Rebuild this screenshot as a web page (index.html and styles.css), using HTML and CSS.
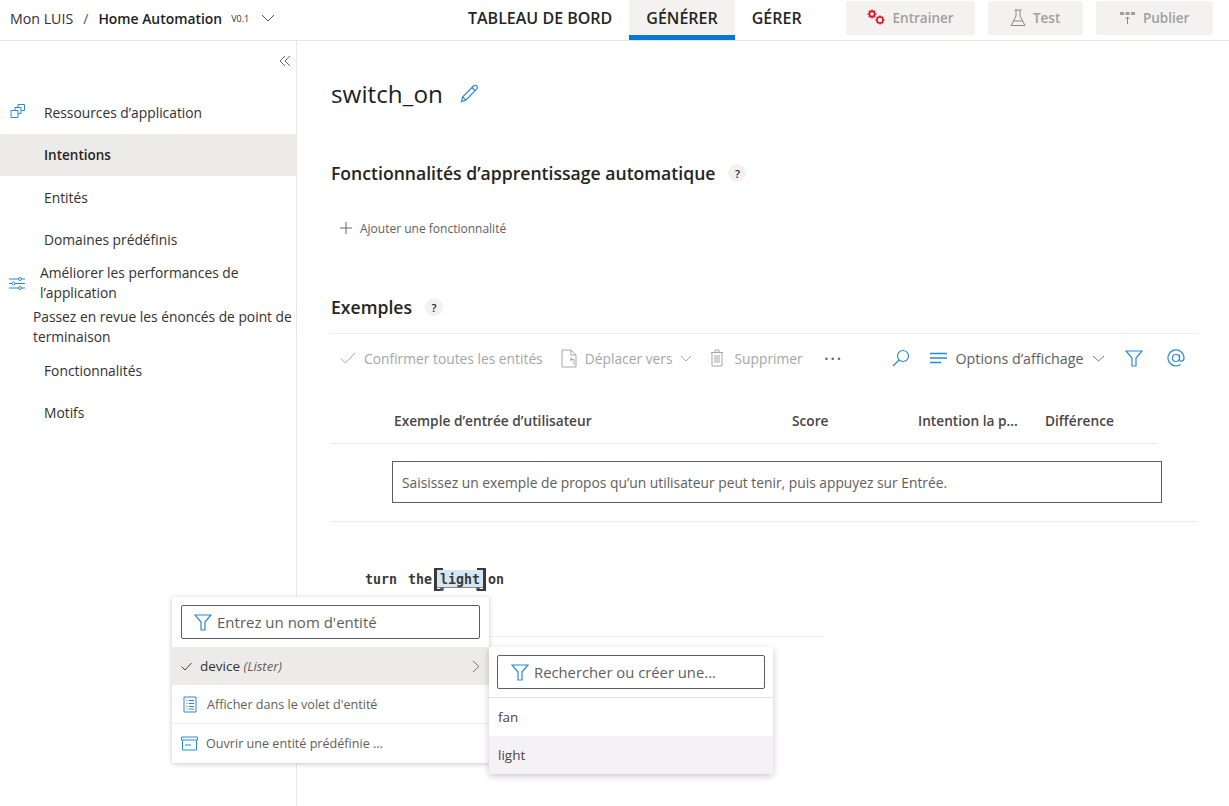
FILE: index.html
```html
<!DOCTYPE html>
<html lang="fr">
<head>
  <meta charset="UTF-8" />
  <title>switch_on - LUIS</title>
  <link rel="stylesheet" href="styles.css">
</head>
<body>
  <header class="topbar">
    <div class="crumbs">
      <span>Mon LUIS</span>
      <span class="slash">/</span>
      <strong>Home Automation</strong>
      <span class="version">V0.1</span>
      <svg class="chev" width="14" height="8" viewBox="0 0 14 8"><path d="M1 1l6 6 6-6" fill="none" stroke="#555" stroke-width="1"/></svg>
    </div>
    <nav class="tabs">
      <a class="tab">TABLEAU DE BORD</a>
      <a class="tab active">GÉNÉRER</a>
      <a class="tab">GÉRER</a>
    </nav>
    <div class="actions">
      <button class="btn btn-train">
        <svg width="19" height="17" viewBox="0 0 19 17" fill="none" stroke="#e81123" stroke-width="1.6"><circle cx="5" cy="5" r="2.6"/><circle cx="13" cy="11" r="3"/><path d="M5 .5v1.5M5 8v1.5M.5 5H2M8 5h1.500M1.900 1.900l1 1M7.100 7.100l1 1M8.100 1.900l-1 1M2.900 7.100l-1 1M13 6.500V8M13 14v1.500M8.500 11H10M16 11h1.500M9.900 7.900l1 1M15.100 13.100l1 1M16.100 7.900l-1 1M10.900 13.100l-1 1"/></svg>
        Entrainer
      </button>
      <button class="btn btn-test">
        <svg width="16" height="18" viewBox="0 0 16 18" fill="none" stroke="#8a8886"><path d="M4.500 1h7M6 1v6L1 16.500h14L10 7V1M3.500 12h9"/></svg>
        Test
      </button>
      <button class="btn btn-publish">
        <svg width="17" height="15" viewBox="0 0 17 15"><path d="M1 2h4v3H1zM6.500 2h4v3h-4zM12 2h4v3h-4z" fill="#a19f9d"/><path d="M8.500 14V7M6.500 9l2-2 2 2" fill="none" stroke="#8a8886"/></svg>
        Publier
      </button>
    </div>
  </header>

  <div class="layout">
    <aside class="sidebar">
      <div class="collapse">
        <svg width="12" height="12" viewBox="0 0 12 12" fill="none" stroke="#666"><path d="M6 1L1 6l5 5M11 1L6 6l5 5"/></svg>
      </div>
      <ul class="nav">
        <li class="nav-item nav-res">
          <svg class="nav-icon" width="16" height="16" viewBox="0 0 16 16" fill="none" stroke="#2b88d8"><path d="M1 7.500h7v7H1zM5 7.500V4.500h6v6H8M8 4.500V1.500h6.500v6H11"/></svg>
          Ressources d’application
        </li>
        <li class="nav-item current">Intentions</li>
        <li class="nav-item">Entités</li>
        <li class="nav-item">Domaines prédéfinis</li>
        <li class="nav-long nav-perf">
          <svg class="perf-icon" width="16" height="15" viewBox="0 0 16 15" fill="none" stroke="#2b88d8"><path d="M0 3h16M0 7.500h16M0 12h16"/><circle cx="11" cy="3" r="1.500" fill="#fff"/><circle cx="4.500" cy="7.500" r="1.500" fill="#fff"/><circle cx="11" cy="12" r="1.500" fill="#fff"/></svg>
          Améliorer les performances de l’application
        </li>
        <li class="nav-long nav-review">Passez en revue les énoncés de point de terminaison</li>
        <li class="nav-item">Fonctionnalités</li>
        <li class="nav-item">Motifs</li>
      </ul>
    </aside>

    <main class="content">
      <div class="title-row">
        <h1>switch_on</h1>
        <svg width="19" height="19" viewBox="0 0 19 19" fill="none" stroke="#2b88d8" stroke-width="1.200"><path d="M1.500 17.500l1.200-4.700L13.500 2c1-1 2.500-1 3.300-.1s.8 2.200-.2 3.200L5.800 16.200zM2.700 12.800l3.100 3.400M12 3.500l3.400 3.300"/></svg>
      </div>

      <section class="features">
        <h2>Fonctionnalités d’apprentissage automatique <span class="help">?</span></h2>
        <div class="add-feature">
          <svg width="14" height="14" viewBox="0 0 14 14" stroke="#666"><path d="M7 1v12M1 7h12"/></svg>
          Ajouter une fonctionnalité
        </div>
      </section>

      <section class="examples">
        <h2>Exemples <span class="help">?</span></h2>
        <div class="toolbar">
          <span class="tool off tool-confirm">
            <svg width="16" height="12" viewBox="0 0 16 12" fill="none" stroke="#a6a6a6"><path d="M1 6.500l4.500 4.500L15 1"/></svg>
            Confirmer toutes les entités
          </span>
          <span class="tool off tool-move">
            <svg width="16" height="19" viewBox="0 0 16 19" fill="none" stroke="#a6a6a6"><path d="M10 1H1v17h14V6zM10 1v5h5M11 9l-2 1.500 2 1.500M9.500 10.500H13V16"/></svg>
            Déplacer vers
            <svg width="12" height="7" viewBox="0 0 12 7" fill="none" stroke="#a6a6a6"><path d="M1 1l5 5 5-5"/></svg>
          </span>
          <span class="tool off tool-delete">
            <svg width="14" height="18" viewBox="0 0 14 18" fill="none" stroke="#a6a6a6"><path d="M1 3.500h12M5 3.500V1h4v2.500M2 3.500V17h10V3.500M5 6v8M7 6v8M9 6v8"/></svg>
            Supprimer
          </span>
          <span class="dots">···</span>
          <span class="tool-right">
            <svg class="tool-search" width="18" height="18" viewBox="0 0 18 18" fill="none" stroke="#2b88d8" stroke-width="1.200"><circle cx="11" cy="7" r="5.500"/><path d="M7 11l-6 6"/></svg>
            <span class="tool view">
              <svg width="17" height="12" viewBox="0 0 17 12" fill="none" stroke="#2b88d8" stroke-width="1.300"><path d="M0 1.500h17M0 6h17M0 10.500h11"/></svg>
              Options d’affichage
              <svg width="13" height="7" viewBox="0 0 13 7" fill="none" stroke="#777"><path d="M1 1l5.500 5L12 1"/></svg>
            </span>
            <svg class="tool-filter" width="18" height="17" viewBox="0 0 18 17" fill="none" stroke="#2b88d8" stroke-width="1.200"><path d="M1 1h16l-6 7v8H7V8z"/></svg>
            <svg class="tool-at" width="18" height="18" viewBox="0 0 18 18" fill="none" stroke="#2b88d8" stroke-width="1.200"><circle cx="9" cy="9" r="3.500"/><path d="M12.500 5.500V10.500c0 2.500 4.500 2.500 4.500-1.500a8 8 0 1 0-3.500 6.600"/></svg>
          </span>
        </div>

        <div class="table-head">
          <span class="col col-input">Exemple d’entrée d’utilisateur</span>
          <span class="col col-score">Score</span>
          <span class="col col-intent">Intention la p...</span>
          <span class="col col-diff">Différence</span>
        </div>
        <div class="entry-row">
          <div class="entry">Saisissez un exemple de propos qu’un utilisateur peut tenir, puis appuyez sur Entrée.</div>
        </div>
        <div class="utterance">
          turn the <span class="entity">light<i class="dot dot-left"></i><i class="dot dot-right"></i></span> on
        </div>
      </section>
    </main>
  </div>

  <div class="menu menu-entity">
    <div class="menu-search">
      <div class="search-box">
        <svg width="18" height="17" viewBox="0 0 18 17" fill="none" stroke="#2b88d8" stroke-width="1.200"><path d="M1 1h16l-6 7v8H7V8z"/></svg>
        Entrez un nom d'entité
      </div>
    </div>
    <div class="menu-device">
      <svg width="11" height="9" viewBox="0 0 11 9" fill="none" stroke="#444"><path d="M.5 4.500L4 8 10.500 1"/></svg>
      <span class="device-name">device <em>(Lister)</em></span>
      <svg class="device-arrow" width="8" height="13" viewBox="0 0 8 13" fill="none" stroke="#777"><path d="M1 1l6 5.500L1 12"/></svg>
    </div>
    <div class="menu-link">
      <svg width="14" height="17" viewBox="0 0 14 17" fill="none" stroke="#2b88d8"><path d="M1 1h12v15H1zM3.500 4.500h1M6 4.500h5M3.500 7.500h1M6 7.500h5M3.500 10.500h1M6 10.500h5M3.500 13h1M6 13h5"/></svg>
      Afficher dans le volet d'entité
    </div>
    <div class="menu-link menu-link-last">
      <svg width="17" height="15" viewBox="0 0 17 15" fill="none" stroke="#2b88d8"><path d="M.5 1h16v3H.5zM1.500 4v10h14V4M4 9h6"/></svg>
      Ouvrir une entité prédéfinie ...
    </div>
  </div>

  <div class="menu menu-list">
    <div class="menu-search list-search">
      <div class="search-box">
        <svg width="18" height="17" viewBox="0 0 18 17" fill="none" stroke="#2b88d8" stroke-width="1.200"><path d="M1 1h16l-6 7v8H7V8z"/></svg>
        Rechercher ou créer une...
      </div>
    </div>
    <div class="list-item">fan</div>
    <div class="list-item picked">light</div>
  </div>
</body>
</html>
```
FILE: styles.css
```css
* {
  box-sizing: border-box;
}
html, body {
  height: 100%;
}
body {
  margin: 0;
  height: 806px;
  overflow: hidden;
  font-family: 'Open Sans', 'Noto Sans', sans-serif;
  font-size: 13.8px;
  color: #323130;
  background-color: #fff;
}

/* top bar */
.topbar {
  display: flex;
  align-items: center;
  height: 41px;
  border-bottom: 1px solid #e6e6e6;
  padding-left: 10px;
}
.crumbs {
  display: flex;
  align-items: center;
  width: 458px;
  padding-bottom: 4px;
  font-size: 14.2px;
  white-space: nowrap;
}
.slash {
  margin: 0 10px;
  color: #555;
}
.crumbs strong {
  font-weight: 600;
  color: #201f1e;
  font-size: 13.9px;
}
.version {
  font-size: 9px;
  margin: 0 12px 0 9px;
}
.tabs {
  display: flex;
  height: 40px;
}
.tab {
  display: flex;
  align-items: center;
  padding: 0 17px;
  font-size: 16px;
  font-weight: 600;
  color: #252423;
  white-space: nowrap;
  border-bottom: 5px solid transparent;
}
.tab:first-child {
  padding-left: 0;
}
.tab.active {
  border-bottom-color: #0078d4;
  background: #f3f2f1;
}
.actions {
  display: flex;
  gap: 13px;
  margin-left: 27px;
  margin-top: -5px;
}
.btn {
  display: flex;
  align-items: center;
  justify-content: center;
  gap: 7px;
  height: 34px;
  border: none;
  border-radius: 2px;
  background-color: #f3f2f1;
  color: #a19f9d;
  font-family: inherit;
  font-size: 13.5px;
  font-weight: 600;
}
.btn-train { width: 129px; }
.btn-test { width: 95px; }
.btn-publish { width: 117px; }

/* left side */
.layout {
  display: flex;
  height: 765px;
}
.sidebar {
  width: 297px;
  flex: none;
  border-right: 1px solid #e6e6e6;
}
.collapse {
  display: flex;
  justify-content: flex-end;
  padding: 14px 5px 0 0;
  height: 50px;
}
.nav {
  list-style: none;
  margin: 0;
  padding: 0;
}
.nav-item {
  position: relative;
  display: flex;
  align-items: center;
  height: 42px;
  padding: 1px 0 0 44px;
}
.nav-res {
  margin-bottom: 1px;
  padding-top: 0;
}
.nav-icon {
  position: absolute;
  left: 10px;
  top: 12px;
}
.current {
  padding-top: 0;
  background-color: #edebe9;
  font-size: 13.5px;
  font-weight: 600;
  color: #252423;
}
.nav-long {
  position: relative;
  line-height: 20px;
}
.nav-perf {
  padding: 3px 20px 0 40px;
}
.perf-icon {
  position: absolute;
  left: 9px;
  top: 16px;
}
.nav-review {
  padding: 4px 0 2px 33px;
}

/* main */
.content {
  flex: 1;
  padding: 0 32px 0 34px;
  min-width: 0;
}
.title-row {
  display: flex;
  align-items: center;
  gap: 17px;
  height: 36px;
  margin-top: 34px;
}
h1 {
  margin: 0;
  font-size: 24.3px;
  font-weight: 500;
  color: #201f1e;
}
h2 {
  display: flex;
  align-items: center;
  gap: 13px;
  margin: 0;
  height: 24px;
  font-size: 17.6px;
  font-weight: 600;
  color: #252423;
}
.help {
  display: inline-flex;
  align-items: center;
  justify-content: center;
  width: 18px;
  height: 18px;
  border-radius: 50%;
  background-color: #f3f2f1;
  font-size: 11px;
  font-weight: 600;
}
.features {
  margin-top: 50px;
}
.add-feature {
  display: flex;
  align-items: center;
  gap: 7px;
  margin: 33px 0 0 8px;
  height: 20px;
  font-size: 12px;
  color: #605e5c;
}
.examples {
  margin-top: 57px;
}
.toolbar {
  display: flex;
  align-items: center;
  height: 49px;
  margin-top: 14px;
  border-top: 1px solid #edebe9;
  font-size: 13.8px;
  color: #a6a6a6;
}
.tool {
  display: flex;
  align-items: center;
  gap: 8px;
  white-space: nowrap;
}
.tool-confirm {
  margin-left: 9px;
}
.tool-move {
  margin-left: 18px;
}
.tool-delete {
  gap: 10px;
  margin-left: 18px;
}
.dots {
  margin-left: 21px;
  font-size: 20px;
  letter-spacing: 1px;
  color: #666;
}
.tool-right {
  display: flex;
  align-items: center;
  margin-left: 50px;
}
.view {
  margin-left: 20px;
  font-size: 14.3px;
  color: #605e5c;
}
.tool-filter {
  margin-left: 20px;
}
.tool-at {
  margin-left: 24px;
}
.table-head {
  display: flex;
  align-items: center;
  height: 62px;
  margin-right: 39px;
  border-bottom: 1px solid #edebe9;
  padding-top: 15px;
  font-size: 13.7px;
  font-weight: 600;
  color: #484644;
}
.col {
  white-space: nowrap;
}
.col-input { padding-left: 63px; width: 461px; }
.col-score { width: 126px; }
.col-intent { width: 127px; }
.entry-row {
  height: 78px;
  padding: 17px 35px 0 61px;
  border-bottom: 1px solid #edebe9;
}
.entry {
  display: flex;
  align-items: center;
  height: 42px;
  padding-left: 9px;
  border: 1px solid #605e5c;
  font-size: 13.8px;
  color: #605e5c;
}
.utterance {
  width: 494px;
  height: 115px;
  padding: 50px 0 0 34px;
  border-bottom: 1px solid #f3f2f1;
  font-family: 'DejaVu Sans Mono', 'Liberation Mono', monospace;
  font-size: 13.3px;
  font-weight: 700;
  word-spacing: 3px;
  color: #3b3a39;
  white-space: nowrap;
}
.entity {
  position: relative;
  margin: 0 -6px;
  padding: 2px 3px 1px;
  background-color: #d5e6f5;
  box-shadow: inset 0 -1px 0 #8a8886;
}
.entity::before,
.entity::after {
  content: "";
  position: absolute;
  top: -2px;
  bottom: -3px;
  width: 6px;
  border: solid #3b3a39;
  border-width: 2px 0;
}
.entity::before {
  left: -3px;
  border-left-width: 3px;
}
.entity::after {
  right: -3px;
  border-right-width: 3px;
}
.dot {
  position: absolute;
  bottom: -3px;
  width: 4px;
  height: 4px;
  border-radius: 50%;
  background-color: #605e5c;
}
.dot-left { left: 3px; }
.dot-right { right: 3px; }

/* menus */
.menu {
  position: absolute;
  background-color: #fff;
  box-shadow: 0 1px 5px rgba(0, 0, 0, 0.22);
}
.menu-entity {
  left: 172px;
  top: 597px;
  width: 317px;
  height: 166px;
}
.menu-search {
  height: 50px;
  padding: 8px 9px 0;
}
.search-box {
  display: flex;
  align-items: center;
  gap: 5px;
  height: 34px;
  padding-left: 12px;
  border: 1px solid #605e5c;
  border-radius: 2px;
  font-size: 15px;
  color: #605e5c;
}
.menu-device {
  display: flex;
  align-items: center;
  height: 38px;
  padding-left: 9px;
  background-color: #edebe9;
  font-size: 13.5px;
}
.device-name {
  margin-left: 8px;
}
.device-name em {
  font-size: 13px;
  color: #605e5c;
}
.device-arrow {
  margin-left: auto;
  margin-right: 9px;
}
.menu-link {
  display: flex;
  align-items: center;
  gap: 10px;
  height: 39px;
  padding-left: 11px;
  border-bottom: 1px solid #edebe9;
  font-size: 12.6px;
  color: #605e5c;
}
.menu-link-last {
  gap: 8px;
  border-bottom: none;
  padding-left: 9px;
}
.menu-list {
  left: 489px;
  top: 647px;
  width: 284px;
  height: 127px;
  box-shadow: 0 2px 7px rgba(0, 0, 0, 0.22);
}
.list-search {
  height: 51px;
  padding: 8px 8px 0;
  border-bottom: 1px solid #e1dfdd;
}
.list-search .search-box {
  padding-left: 13px;
  font-size: 14.8px;
}
.list-item {
  display: flex;
  align-items: center;
  height: 38px;
  padding-left: 9px;
  font-size: 13.5px;
  color: #484644;
}
.list-item.picked {
  background-color: #f5f2f5;
}
```
